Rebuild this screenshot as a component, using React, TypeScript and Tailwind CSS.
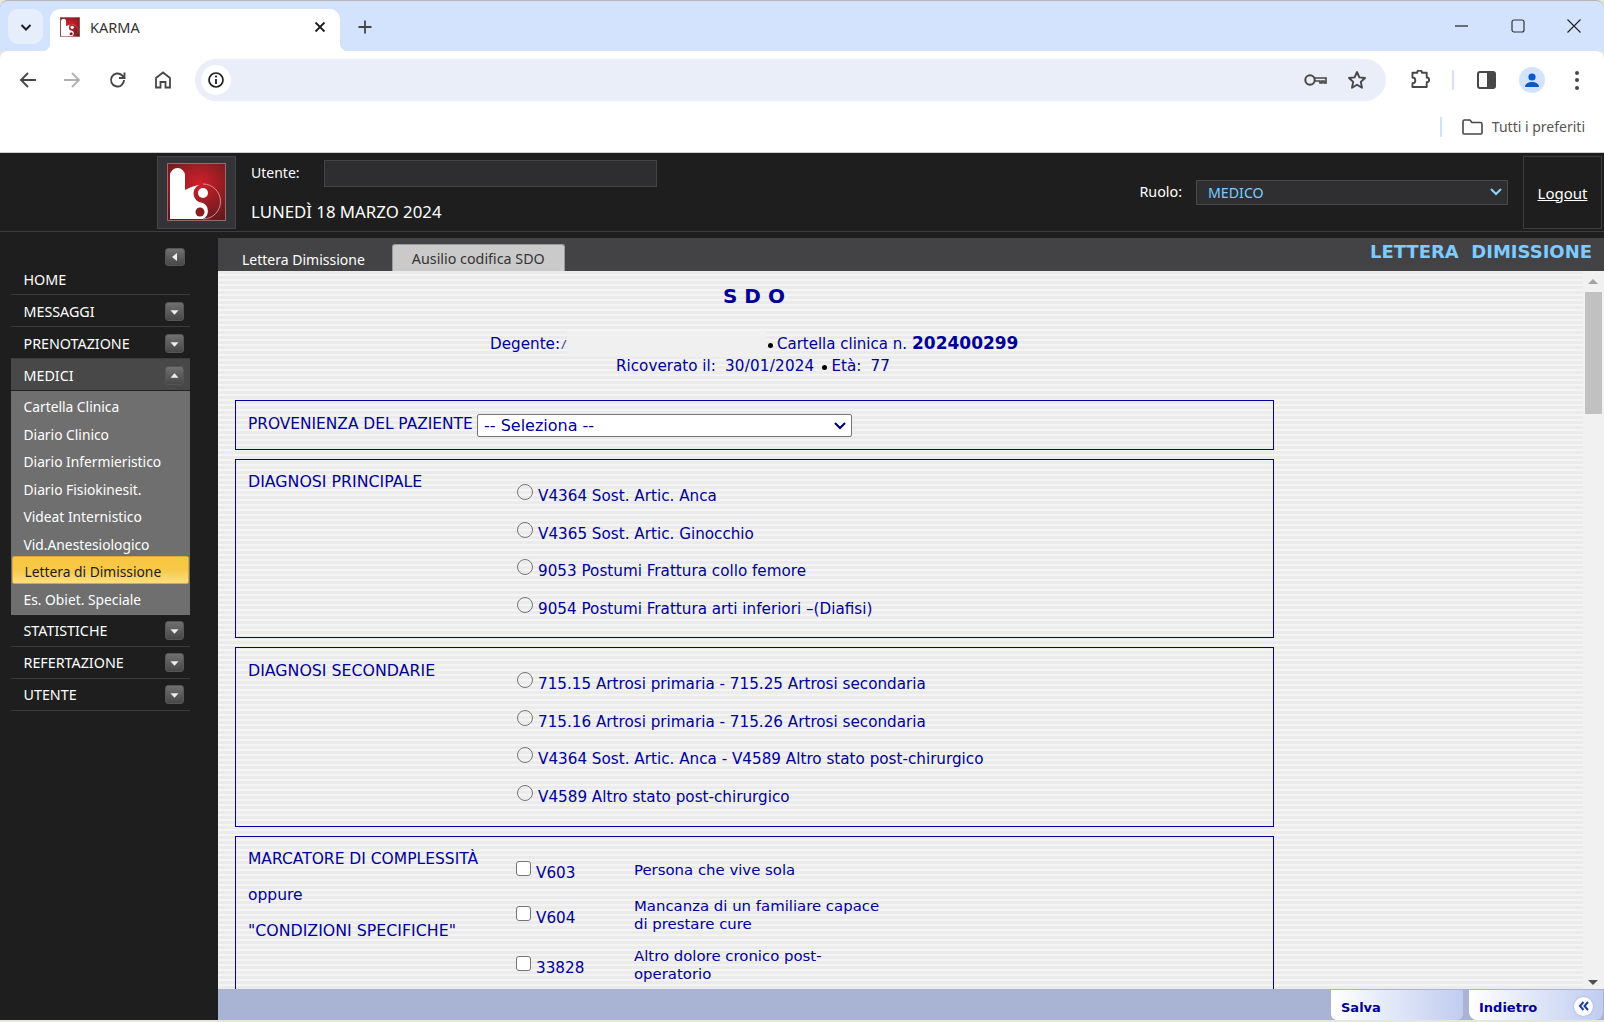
import React from "react";

const VERD = "font-['DejaVu_Sans',Verdana,sans-serif]";
const NAV = "font-['Noto_Sans',Tahoma,sans-serif]";

function Logo({ size, id, height }: { size: number; id: string; height: number }) {
  return (
    <svg width={size} height={height} viewBox="0 0 59 58" className="block shrink-0">
      <defs>
        <radialGradient id={id} cx="0.55" cy="0.35" r="0.75">
          <stop offset="0" stopColor="#d2202a" />
          <stop offset="1" stopColor="#5d1a1d" />
        </radialGradient>
      </defs>
      <rect x="0.5" y="0.5" width="58" height="57" fill={`url(#${id})`} stroke="#9a6a6a" />
      <path d="M3 56V12.500a7.500 7.500 0 0 1 15 0V27c5-3 12-5 18-6a9.500 9.500 0 0 0 0 19 9 9 0 0 1 0 16z" fill="#fff" />
      <path d="M36 21a17.500 17.500 0 0 1 0 35" fill="none" stroke="#e8c0c0" strokeWidth="0.7" />
      <circle cx="36" cy="30" r="5" fill="#fff" />
      <circle cx="33" cy="49" r="4.5" fill="#8a1c22" />
    </svg>
  );
}

function Caret({ dir }: { dir: "down" | "up" | "left" }) {
  const pts = dir === "down" ? "5,8 14,8 9.5,13" : dir === "up" ? "5,12 14,12 9.5,7" : "12,5 12,14 7,9.5";
  return (
    <span className="block w-[19px] h-[19px] rounded-[3px] border border-[#555] bg-gradient-to-b from-[#707070] to-[#484848]">
      <svg width="17" height="17" viewBox="0 0 19 19" className="block">
        <polygon points={pts} fill="#eee" />
      </svg>
    </span>
  );
}

function NavRow({ label, dir, active, low }: { label: string; dir?: "down" | "up"; active?: boolean; low?: boolean }) {
  return (
    <div className={`h-[32px] flex items-center justify-between pl-[12.5px] pr-[6px] text-[14.3px] text-white ${low ? "pt-[2px]" : ""} ${active ? "bg-[#484848] border-b border-[#222]" : "border-b border-[#3c3c3c]"}`}>
      <span>{label}</span>
      {dir && <Caret dir={dir} />}
    </div>
  );
}

function Radio({ label }: { label: string }) {
  return (
    <div className="h-[37.5px] flex items-start">
      <span className="w-[16px] h-[16px] rounded-full border border-[#767676] bg-transparent mt-[1px] mr-[4px] shrink-0" />
      <span className="mt-[5px] ml-[1px] leading-[17px] whitespace-nowrap">{label}</span>
    </div>
  );
}

function Check() {
  return <span className="block w-[15px] h-[15px] rounded-[3px] border border-[#767676] bg-white shrink-0" />;
}

const stripes = "bg-[repeating-linear-gradient(180deg,#ebebeb_0px,#ebebeb_3px,#f4f4f4_3px,#f4f4f4_5px)]";

export default function App() {
  const sub = ["Cartella Clinica", "Diario Clinico", "Diario Infermieristico", "Diario Fisiokinesit.", "Videat Internistico", "Vid.Anestesiologico"];
  return (
    <div className="w-[1604px] h-[1022px] flex flex-col overflow-hidden bg-[#e4e7da]">
      {/* tab strip */}
      <div className="h-[51px] shrink-0 bg-[#d3e3fd] border-t border-[#b5b5b5] rounded-t-[8px] flex items-start relative">
        <div className="ml-[8px] mt-[8px] w-[35px] h-[35px] rounded-[10px] bg-[#e6eefc] flex items-center justify-center">
          <svg width="14" height="14" viewBox="0 0 14 14"><path d="M2.5 5l4.500 4.500L11.500 5" fill="none" stroke="#1f1f1f" strokeWidth="2" /></svg>
        </div>
        <div className="ml-[7px] mt-[8px] w-[290px] h-[42px] bg-white rounded-t-[10px] flex items-center pl-[10px] pr-[14px] pb-[6px] relative">
          <span className="absolute left-[-8px] bottom-0 w-[8px] h-[8px] bg-[radial-gradient(circle_at_0_0,#d3e3fd_8px,#fff_8.5px)]" />
          <span className="absolute right-[-8px] bottom-0 w-[8px] h-[8px] bg-[radial-gradient(circle_at_100%_0,#d3e3fd_8px,#fff_8.5px)]" />
          <Logo size={20} height={20} id="fav" />
          <span className={`${NAV} ml-[10px] mt-[2px] text-[14.5px] text-[#333] flex-1`}>KARMA</span>
          <svg width="12" height="12" viewBox="0 0 12 12"><path d="M1.500 1.500l9 9M10.500 1.500l-9 9" stroke="#1f1f1f" strokeWidth="1.8" /></svg>
        </div>
        <div className="ml-[18px] mt-[19px]">
          <svg width="14" height="14" viewBox="0 0 14 14"><path d="M7 .5v13M.5 7h13" stroke="#444" strokeWidth="1.8" /></svg>
        </div>
        <div className="ml-auto flex items-center mt-[17px] mr-[23px] gap-[42px]">
          <svg width="14" height="16" viewBox="0 0 14 16"><path d="M0 8h13" stroke="#1f1f1f" strokeWidth="1.2" /></svg>
          <svg width="14" height="16" viewBox="0 0 14 14"><rect x="1" y="1" width="12" height="12" rx="2" fill="none" stroke="#333" strokeWidth="1.2" /></svg>
          <svg width="14" height="16" viewBox="0 0 14 14"><path d="M.5.500l13 13M13.500.500l-13 13" stroke="#1f1f1f" strokeWidth="1.1" /></svg>
        </div>
      </div>
      {/* toolbar */}
      <div className="h-[50px] shrink-0 bg-white rounded-t-[8px] pt-[8px] flex items-center text-[#474747] relative">
        <div className="ml-[19px] w-[20px]">
          <svg width="18" height="18" viewBox="0 0 18 18" className="block"><path d="M17 9H2M9 2L2 9l7 7" fill="none" stroke="#474747" strokeWidth="1.9" /></svg>
        </div>
        <div className="ml-[24px] w-[20px]">
          <svg width="18" height="18" viewBox="0 0 18 18" className="block"><path d="M1 9h15M9 2l7 7-7 7" fill="none" stroke="#b0b0b0" strokeWidth="1.9" /></svg>
        </div>
        <div className="ml-[26px] w-[20px]">
          <svg width="18" height="18" viewBox="0 0 18 18" className="block"><path d="M15 9a6.500 6.500 0 1 1-2-4.700L15.500 7M15.500 1.500V7H10" fill="none" stroke="#474747" strokeWidth="1.9" /></svg>
        </div>
        <div className="ml-[25px] w-[20px]">
          <svg width="18" height="18" viewBox="0 0 18 18" className="block"><path d="M2 16.500V7l7-5.500L16 7v9.500h-4.500V11h-5v5.500z" fill="none" stroke="#474747" strokeWidth="1.8" /></svg>
        </div>
        <div className="ml-[21px] w-[1191px] h-[42px] rounded-full bg-[#e9eef8] flex items-center pl-[6px] pr-[19px]">
          <span className="w-[30px] h-[30px] rounded-full bg-white flex items-center justify-center">
            <svg width="16" height="16" viewBox="0 0 16 16"><circle cx="8" cy="8" r="7" fill="none" stroke="#1f1f1f" strokeWidth="1.7" /><path d="M8 7v5" stroke="#1f1f1f" strokeWidth="1.8" /><circle cx="8" cy="4.500" r="1.1" fill="#1f1f1f" /></svg>
          </span>
          <span className="ml-auto flex items-center gap-[20px]">
            <svg width="23" height="14" viewBox="0 0 23 14"><circle cx="6" cy="7" r="4.700" fill="none" stroke="#474747" strokeWidth="2" /><path d="M10.500 5h11.500v5h-2V8h-2v2h-2V8h-5.500" fill="none" stroke="#474747" strokeWidth="1.7" /></svg>
            <svg width="20" height="20" viewBox="0 0 20 20"><path d="M10 2l2.400 5.400 5.600.6-4.200 3.900 1.200 5.800L10 14.800 5 17.700l1.200-5.800L2 8l5.600-.6z" fill="none" stroke="#474747" strokeWidth="1.9" strokeLinejoin="round" /></svg>
          </span>
        </div>
        <div className="ml-[24px] w-[20px]">
          <svg width="20" height="20" viewBox="0 0 20 20" className="block"><path d="M1 4h5a2.500 2.500 0 0 1 5 0h5v5a2.500 2.500 0 0 1 0 5v5H1v-4a2.500 2.500 0 0 0 0-6z" transform="translate(1.500 -1) scale(.95)" fill="none" stroke="#474747" strokeWidth="2" strokeLinejoin="round" /></svg>
        </div>
        <span className="ml-[22px] w-[2px] h-[20px] bg-[#d3e3fd]" />
        <div className="ml-[23px] w-[20px]">
          <svg width="19" height="18" viewBox="0 0 19 18" className="block"><rect x="1" y="1" width="17" height="16" rx="2" fill="none" stroke="#474747" strokeWidth="2" /><rect x="10" y="1" width="8" height="16" rx="1" fill="#474747" /></svg>
        </div>
        <span className="ml-[22px] w-[26px] h-[26px] rounded-full bg-[#d3e3fd] flex items-center justify-center">
          <svg width="18" height="18" viewBox="0 0 18 18"><circle cx="9" cy="6" r="3.600" fill="#0b57d0" /><path d="M2 16c0-3.500 3.500-5 7-5s7 1.500 7 5z" fill="#0b57d0" /></svg>
        </span>
        <span className="ml-[30px] flex flex-col gap-[3.5px]">
          <span className="w-[4px] h-[4px] rounded-full bg-[#474747]" />
          <span className="w-[4px] h-[4px] rounded-full bg-[#474747]" />
          <span className="w-[4px] h-[4px] rounded-full bg-[#474747]" />
        </span>
      </div>
      {/* bookmarks */}
      <div className="h-[52px] shrink-0 bg-white border-b border-[#cfcfcf] flex items-center justify-end pr-[19px]">
        <span className="w-[2px] h-[20px] bg-[#d3e3fd] mr-[20px]" />
        <svg width="21" height="16" viewBox="0 0 21 16" className="mr-[9px]"><path d="M1 2.500a1.500 1.500 0 0 1 1.500-1.500H8l2 2.500h8.500A1.500 1.500 0 0 1 20 5v9a1 1 0 0 1-1 1H2a1 1 0 0 1-1-1z" fill="none" stroke="#474747" strokeWidth="1.6" /></svg>
        <span className={`${NAV} text-[14px] text-[#555]`}>Tutti i preferiti</span>
      </div>
      {/* app header */}
      <div className={`${NAV} h-[79px] shrink-0 bg-[#1e1e1e] border-b border-[#3d3d3d] flex items-center text-white`}>
        <div className="ml-[157px] w-[79px] h-[73px] bg-[#333338] border border-[#444] flex items-center justify-center">
          <Logo size={59} height={58} id="main" />
        </div>
        <div className="ml-[15px] w-[406px] h-full flex flex-col">
          <div className="h-[41px] flex items-center">
            <span className="text-[14px] w-[73px] mt-[-3px]">Utente:</span>
            <span className="w-[333px] h-[27px] bg-[#2e2e30] border border-[#444] mt-[-1px]" />
          </div>
          <div className="text-[16.8px] mt-[6px] leading-[24px]">LUNEDÌ 18 MARZO 2024</div>
        </div>
        <div className="ml-auto flex items-center">
          <span className="text-[14.3px] mr-[14px] mt-[-1px]">Ruolo:</span>
          <div className="w-[312px] h-[25px] bg-[#2f2f31] border border-[#48484a] flex items-center justify-between pl-[11px] pr-[4px] text-[14.2px] text-[#7fcbff]">
            <span className="mt-[2px]">MEDICO</span>
            <svg width="14" height="10" viewBox="0 0 14 10"><path d="M2 2l5 5 5-5" fill="none" stroke="#8fd0ff" strokeWidth="2" /></svg>
          </div>
          <div className="ml-[15px] mr-[2px] w-[79px] h-[73px] border border-[#3d3d3d] pt-[2px] flex items-center justify-center text-[15px] underline">Logout</div>
        </div>
      </div>
      {/* body */}
      <div className="h-[788px] shrink-0 flex bg-[#1e1e1e]">
        <aside className={`${NAV} w-[218px] shrink-0 pl-[11px] pr-[28px] pt-[16px]`}>
          <div className="flex justify-end pr-[5px] h-[18px]">
            <span className="w-[20px] h-[18px] rounded-[3px] border border-[#555] bg-gradient-to-b from-[#707070] to-[#484848] flex items-center justify-center">
              <svg width="10" height="10" viewBox="0 0 10 10"><polygon points="7,1 7,9 2,5" fill="#eee" /></svg>
            </span>
          </div>
          <div className="h-[29px] flex items-center pl-[12.5px] text-[14.3px] text-white border-b border-[#3c3c3c]">HOME</div>
          <NavRow label="MESSAGGI" dir="down" low />
          <NavRow label="PRENOTAZIONE" dir="down" low />
          <NavRow label="MEDICI" dir="up" active low />
          <div className="bg-[#6f6f6f] text-[13.8px] text-white h-[224px] flex flex-col">
            {sub.map((s) => (
              <div key={s} className="h-[27.5px] pt-[6px] flex items-center pl-[12.5px]">{s}</div>
            ))}
            <div className="h-[28px] mx-[1px] pl-[11.5px] pt-[4px] flex items-center rounded-[2px] border border-[#d9a83e] bg-gradient-to-b from-[#f7c63f] via-[#f7c94a] to-[#fbe07e] text-[#1c1c1c]">Lettera di Dimissione</div>
            <div className="h-[27.5px] pt-[6px] flex items-center pl-[12.5px]">Es. Obiet. Speciale</div>
          </div>
          <NavRow label="STATISTICHE" dir="down" />
          <NavRow label="REFERTAZIONE" dir="down" />
          <NavRow label="UTENTE" dir="down" />
        </aside>
        <div className="flex-1 min-w-0 flex flex-col pt-[6px]">
          <div className={`${NAV} h-[33px] shrink-0 bg-[#434345] flex items-end relative`}>
            <span className="ml-[24px] text-[14px] text-white pb-[1px]">Lettera Dimissione</span>
            <span className="ml-[27px] w-[173px] h-[27px] pt-[2px] rounded-t-[3px] border border-b-0 border-[#9a9a9a] bg-[#cacaca] text-[14.3px] text-[#333] flex items-center justify-center">Ausilio codifica SDO</span>
            <span className={`${VERD} ml-auto self-start mr-[12px] text-[18px] font-bold text-[#7fcbff]`}>LETTERA&nbsp; DIMISSIONE</span>
          </div>
          <div className="flex-1 min-h-0 flex overflow-hidden">
            <main className={`${VERD} ${stripes} flex-1 min-w-0 overflow-hidden text-[15.2px] text-[#000099] pl-[17px]`}>
              <div className="w-[1039px]">
                <h1 className="pl-[488px] h-[60px] pt-[12px] text-[20px] font-bold leading-[26px]">S D O</h1>
                <div className="h-[26px] flex items-center pl-[255px]">
                  <span className="w-[72px] whitespace-nowrap">Degente:</span>
                  <span className="w-[5px] text-[10px] italic">/</span>
                  <span className="w-[199px] h-[26px] bg-[#f0f0f0]" />
                  <span className="w-[5px] h-[5px] rounded-full bg-black ml-[2px] mr-[4px] mt-[2px]" />
                  <span className="text-[15px]">Cartella clinica n.</span>
                  <span className="ml-[5px] font-bold text-[17px]">202400299</span>
                </div>
                <div className="h-[18px] flex items-center pl-[381px]">
                  <span>Ricoverato il:</span>
                  <span className="ml-[9px] tracking-[0.2px]">30/01/2024</span>
                  <span className="w-[5px] h-[5px] rounded-full bg-black ml-[8px] mr-[4px] mt-[2px]" />
                  Età:<span className="ml-[9px]">77</span>
                </div>
                <section className="mt-[25px] h-[50px] border border-[#000099] flex items-start pl-[12px]">
                  <span className="mt-[14px] leading-[18px] w-[229px] text-[15.4px] whitespace-nowrap">PROVENIENZA DEL PAZIENTE</span>
                  <div className="mt-[13px] w-[375px] h-[23px] rounded-[2px] border border-[#767676] bg-white flex items-center justify-between pl-[6px] pr-[4px] text-[16px]">
                    -- Seleziona --
                    <svg width="14" height="10" viewBox="0 0 14 10"><path d="M2 2l5 5 5-5" fill="none" stroke="#000066" strokeWidth="2" /></svg>
                  </div>
                </section>
                <section className="mt-[9px] h-[179px] border border-[#000099] flex items-start pl-[12px] pt-[13px]">
                  <span className="w-[269px] leading-[18px] text-[15.8px]">DIAGNOSI PRINCIPALE</span>
                  <div className="pt-[10px]">
                    <Radio label="V4364 Sost. Artic. Anca" />
                    <Radio label="V4365 Sost. Artic. Ginocchio" />
                    <Radio label="9053 Postumi Frattura collo femore" />
                    <Radio label="9054 Postumi Frattura arti inferiori –(Diafisi)" />
                  </div>
                </section>
                <section className="mt-[9px] h-[180px] border border-[#000099] flex items-start pl-[12px] pt-[14px]">
                  <span className="w-[269px] leading-[18px] text-[15.8px]">DIAGNOSI SECONDARIE</span>
                  <div className="pt-[9px]">
                    <Radio label="715.15 Artrosi primaria - 715.25 Artrosi secondaria" />
                    <Radio label="715.16 Artrosi primaria - 715.26 Artrosi secondaria" />
                    <Radio label="V4364 Sost. Artic. Anca - V4589 Altro stato post-chirurgico" />
                    <Radio label="V4589 Altro stato post-chirurgico" />
                  </div>
                </section>
                <section className="mt-[9px] h-[200px] border border-[#000099] flex items-start pl-[12px] pt-[13px]">
                  <div className="w-[269px] leading-[18px] flex flex-col gap-[18px] text-[15.5px] whitespace-nowrap">
                    <span>MARCATORE DI COMPLESSITÀ</span>
                    <span>oppure</span>
                    <span className="text-[15.8px]">"CONDIZIONI SPECIFICHE"</span>
                  </div>
                  <div className="w-[118px] flex flex-col pt-[11px] -ml-[1px]">
                    <div className="h-[45px] flex items-start"><Check /><span className="ml-[5px] mt-[1px]">V603</span></div>
                    <div className="h-[50px] flex items-start"><Check /><span className="ml-[5px] mt-[1px]">V604</span></div>
                    <div className="h-[30px] flex items-start"><Check /><span className="ml-[5px] mt-[1px]">33828</span></div>
                  </div>
                  <div className="pt-[11px] leading-[18px] w-[262px] text-[14.9px]">
                    <div className="h-[36px]">Persona che vive sola</div>
                    <div className="h-[50px]">Mancanza di un familiare capace<br />di prestare cure</div>
                    <div>Altro dolore cronico post-<br />operatorio</div>
                  </div>
                </section>
              </div>
            </main>
            <div className="w-[21px] shrink-0 bg-[#f1f1f1] flex flex-col items-center pr-[1px]">
              <svg width="12" height="8" viewBox="0 0 12 8" className="mt-[7px]"><polygon points="6,1 11,6 1,6" fill="#a3a3a3" /></svg>
              <div className="w-[17px] h-[122px] bg-[#c1c1c1] mt-[6px]" />
              <svg width="12" height="8" viewBox="0 0 12 8" className="mt-auto mb-[3px]"><polygon points="6,7 11,2 1,2" fill="#505050" /></svg>
            </div>
          </div>
          <footer className={`${VERD} h-[31px] shrink-0 bg-[#a9b3d3] flex justify-end text-[13px] font-bold text-[#000099]`}>
            <div className="w-[132px] h-[30px] mt-[1px] mr-[6px] rounded-b-[6px] bg-gradient-to-r from-white to-[#c0cdf0] flex items-center pl-[10px] pt-[6px]">Salva</div>
            <div className="w-[134px] h-[30px] mt-[1px] mr-[1px] rounded-b-[8px] bg-gradient-to-r from-white to-[#c0cdf0] flex items-center pl-[10px] pr-[10px] pt-[6px] justify-between">
              Indietro
              <span className="w-[19px] h-[19px] rounded-full bg-white shadow-[0_0_2px_#8fa0d8] flex items-center justify-center mt-[-4px]">
                <svg width="12" height="10" viewBox="0 0 12 10"><path d="M5.500 1L2 5l3.500 4M10 1L6.500 5l3.500 4" fill="none" stroke="#1a3fa8" strokeWidth="2" /></svg>
              </span>
            </div>
          </footer>
        </div>
      </div>
    </div>
  );
}
